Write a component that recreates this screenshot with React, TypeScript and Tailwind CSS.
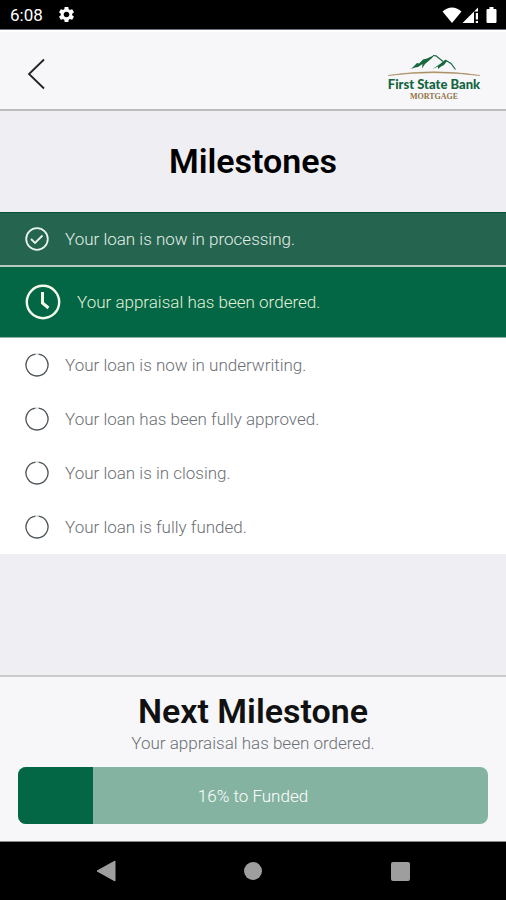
import { useState } from "react";
import { MdSettings } from "react-icons/md";

type Status = "done" | "current" | "pending";

type Milestone = {
  id: number;
  label: string;
  status: Status;
};

const milestones: Milestone[] = [
  { id: 1, label: "Your loan is now in processing.", status: "done" },
  { id: 2, label: "Your appraisal has been ordered.", status: "current" },
  { id: 3, label: "Your loan is now in underwriting.", status: "pending" },
  { id: 4, label: "Your loan has been fully approved.", status: "pending" },
  { id: 5, label: "Your loan is in closing.", status: "pending" },
  { id: 6, label: "Your loan is fully funded.", status: "pending" },
];

function StatusBar() {
  return (
    <div className="flex h-[30px] items-center justify-between border-b border-gray-500 bg-black pr-2 pl-2.5 text-white">
      <div className="flex items-center gap-3.5">
        <span className="text-[17px] leading-6">6:08</span>
        <MdSettings size={19} />
      </div>
      <svg width="56" height="18" viewBox="0 0 56 18" fill="currentColor" aria-hidden="true">
        <path d="M0.5 5.5Q10 -2.5 19.5 5.5L10 17Z" />
        <path d="M20.5 17L36 1.5V5.5H32V17Z" />
        <path d="M33.8 7H36V13.5H33.800zM33.8 15H36V17H33.800z" />
        <path d="M47.500 1h4v2h2q1 0 1 1v12q0 1-1 1h-8q-1 0-1-1V4q0-1 1-1h2z" />
      </svg>
    </div>
  );
}

function Logo() {
  return (
    <div className="flex w-24 flex-col items-center pt-1 whitespace-nowrap">
      <svg width="96" height="22" viewBox="0 0 96 22" fill="none" aria-hidden="true">
        {/* left peak */}
        <path
          d="M25 15L31 9L33 9.5L37 5.500L41 4.500L48.500 1L46 4L42 7.500L39 10L36 14.500L36.500 10L32 13L29 13.500Z"
          fill="#17673f"
        />
        <path d="M47 1.500L50 1.800L57 7.500" stroke="#17673f" strokeWidth="1.2" />
        {/* right peak */}
        <path d="M46.500 15L54 10L59.500 5.500L61 7L58 11L55 12.500L52 15L52 12.500Z" fill="#17673f" />
        <path d="M60 6.500L65 9.500L69.500 15.500" stroke="#17673f" strokeWidth="1.2" />
        <path d="M2 21.500Q48 14 94 21.500Q48 16 2 21.500Z" fill="#a98d60" stroke="#a98d60" strokeWidth="0.5" />
      </svg>
      <span className="font-['Lato'] text-[13px] leading-4 font-black text-[#12653f]">
        First State Bank
      </span>
      <span className="font-['Liberation_Serif'] text-[8px] leading-[9px] font-bold text-[#8f7448]">MORTGAGE</span>
    </div>
  );
}

function Header() {
  return (
    <header className="flex h-[81px] items-start justify-between border-t-2 border-b-2 border-t-white border-b-[#bbbbbe] bg-[#f7f7f9] px-6 pt-[18px]">
      <button type="button" aria-label="Back" className="flex h-12 w-6 items-center">
        <svg width="24" height="32" viewBox="0 0 24 32" fill="none" stroke="#222" strokeWidth="1.8">
          <path d="M20 1.500L5 16L20 30.500" />
        </svg>
      </button>
      <Logo />
    </header>
  );
}

function StatusIcon({ status }: { status: Status }) {
  if (status === "done") {
    return (
      <svg width="24" height="24" viewBox="0 0 24 24" fill="none" stroke="#e8f4ec" strokeWidth="1.8" aria-hidden="true">
        <circle cx="12" cy="12" r="10.800" />
        <path d="M6 12L10 16L17.500 8.500" />
      </svg>
    );
  }
  if (status === "current") {
    return (
      <svg width="36" height="36" viewBox="0 0 36 36" fill="none" stroke="#f4fbea" strokeWidth="2.4" aria-hidden="true">
        <circle cx="18" cy="18" r="16.200" />
        <path d="M17.500 8V19L23.500 24" strokeWidth="3" />
      </svg>
    );
  }
  return (
    <svg width="24" height="24" viewBox="0 0 24 24" fill="none" stroke="#4b5358" strokeWidth="1.3" aria-hidden="true">
      <path d="M13.500 1.100A11 11 0 1 1 10.500 1.100" />
      <path d="M10.500 1.100H13.500" stroke="#d4d6d8" />
    </svg>
  );
}

const rowStyles: Record<Status, string> = {
  done: "h-[55px] border-t border-b-2 border-t-[#0a5238] border-b-[#b5c9be] bg-[#25644f] text-[#e3eee8]",
  current: "h-[71px] border-b border-[#8fb5a4] bg-[#036645] text-[#e2f0d8]",
  pending: "h-[54px] bg-white text-[#6b7075]",
};

function MilestoneRow({ milestone }: { milestone: Milestone }) {
  return (
    <li className={`flex items-center gap-4 px-[25px] text-[17px] leading-6 font-light ${rowStyles[milestone.status]}`}>
      <StatusIcon status={milestone.status} />
      <span>{milestone.label}</span>
    </li>
  );
}

function NavBar() {
  return (
    <nav className="grid h-[58px] grid-cols-3 items-center justify-items-center bg-black px-8 text-[#9e9e9e]">
      <button type="button" aria-label="Back">
        <svg width="20" height="22" viewBox="0 0 20 22" fill="currentColor">
          <path d="M19 1V21L1 11Z" stroke="currentColor" strokeLinejoin="round" />
        </svg>
      </button>
      <button type="button" aria-label="Home" className="size-[18px] rounded-full bg-current" />
      <button type="button" aria-label="Recent apps" className="size-[19px] rounded-xs bg-current" />
    </nav>
  );
}

export default function App() {
  const [percent] = useState(16);
  const next = milestones.find((m) => m.status === "current");

  return (
    <div className="flex min-h-screen flex-col bg-[#efeef3] font-[Roboto,sans-serif]">
      <StatusBar />
      <Header />

      {/* milestone list */}
      <main className="flex-1">
        <h1 className="pt-[30px] pb-[31px] text-center text-[34px] leading-10 font-semibold text-black">
          Milestones
        </h1>
        <ul>
          {milestones.map((m) => (
            <MilestoneRow key={m.id} milestone={m} />
          ))}
        </ul>
      </main>

      {/* next milestone */}
      <footer className="border-t-2 border-b border-t-[#cacacd] border-b-[#8a8a8a] bg-[#f7f7f9] px-[18px] pt-[14px] pb-[17px] text-center">
        <h2 className="text-[34px] leading-10 font-semibold text-[#111]">Next Milestone</h2>
        <p className="text-[17px] leading-6 font-light text-[#6b7075]">{next?.label}</p>
        <div
          role="progressbar"
          aria-valuenow={percent}
          aria-valuemin={0}
          aria-valuemax={100}
          aria-label="Loan progress"
          className="relative mt-3 flex h-[57px] items-center justify-center overflow-hidden rounded-lg bg-[#84b3a2]"
        >
          <div className="absolute inset-y-0 left-0 bg-[#036645]" style={{ width: `${percent}%` }} />
          <span className="relative text-[17px] leading-6 font-light text-white">{percent}% to Funded</span>
        </div>
      </footer>

      <NavBar />
    </div>
  );
}
